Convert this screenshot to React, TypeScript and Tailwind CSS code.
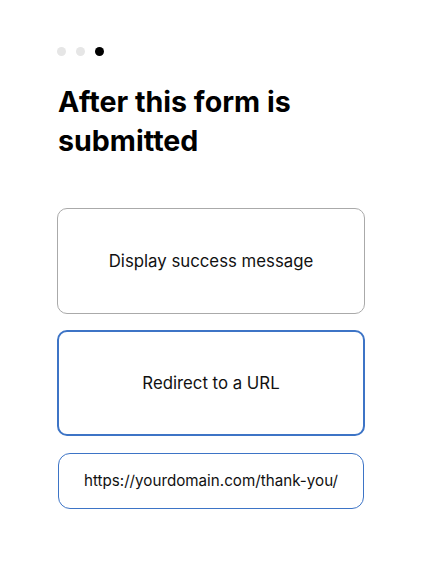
export default function App() {
  return (
    <div className="min-h-[569px] w-[424px] bg-white pl-[57px] pr-[59px] pt-[47px]" style={{ fontFamily: "Inter, 'Noto Sans', sans-serif" }}>
      <div className="flex gap-[10px]">
        <span className="h-[9px] w-[9px] rounded-full bg-[#e6e6e6]" />
        <span className="h-[9px] w-[9px] rounded-full bg-[#e6e6e6]" />
        <span className="h-[9px] w-[9px] rounded-full bg-black" />
      </div>
      <h1 className="mt-[26px] pl-[1px] text-[28.6px] font-bold leading-[39px] text-black">
        After this form is submitted
      </h1>
      <div className="mt-[48px] flex flex-col">
        <div className="flex h-[106px] items-center justify-center rounded-[10px] border border-[#aaaaaa] pt-[1px] text-[16.8px] text-[#111]">
          Display success message
        </div>
        <div className="mt-[16px] flex h-[106px] items-center justify-center rounded-[10px] border-2 border-[#3d74c6] pt-[1px] text-[16.8px] text-[#111]">
          Redirect to a URL
        </div>
        <div className="ml-[1px] mr-[1px] mt-[17px] flex h-[56px] items-center justify-center rounded-[12px] border border-[#3d74c6] text-[15.2px] text-[#111]">
          https://yourdomain.com/thank-you/
        </div>
      </div>
    </div>
  );
}
